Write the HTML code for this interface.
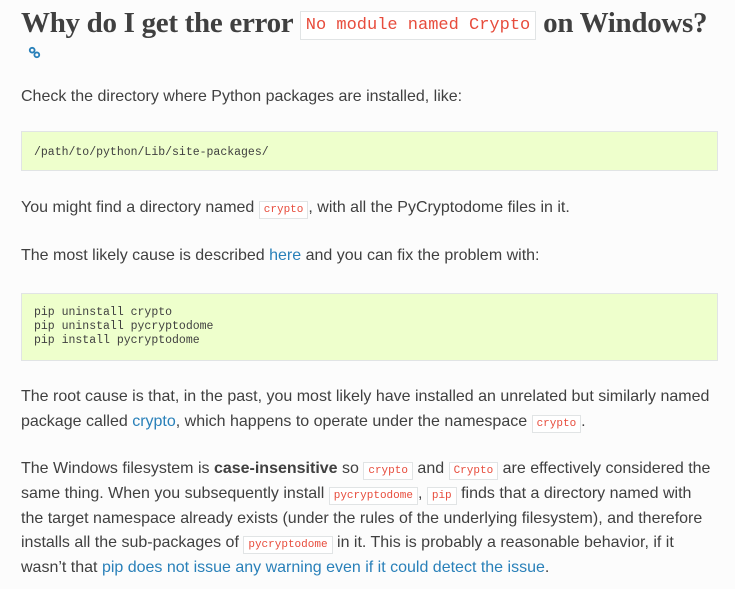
<!DOCTYPE html>
<html><head><meta charset="utf-8"><style>
body{margin:0;background:#fcfcfc;color:#404040;font-family:"Liberation Sans",sans-serif;font-size:16px;line-height:24px;width:735px;height:589px;overflow:hidden}
h1{font-family:"Liberation Serif",serif;font-weight:bold;font-size:29px;line-height:34px;margin:0;position:absolute;left:21px;top:6px;width:700px;color:#404040;letter-spacing:-0.3px}
h1 code{font-family:"Liberation Mono",monospace;font-weight:normal;font-size:17px;color:#e74c3c;background:#fff;border:1px solid #e1e4e5;padding:4px 5px;position:relative;top:-3px;letter-spacing:0;line-height:1}
p{margin:0;position:absolute;left:21px;width:695px}
code{font-family:"Liberation Mono",monospace;font-size:11px;line-height:1;color:#e74c3c;background:#fff;border:1px solid #e1e4e5;padding:2px 4px}
pre{position:absolute;left:21px;width:671px;margin:0;background:#eeffcc;border:1px solid #e1e4e5;font-family:"Liberation Mono",monospace;font-size:11.5px;line-height:14px;padding:12px}
a{color:#2980b9;text-decoration:none}
</style></head><body>
<h1>Why do I get the error <code>No module named Crypto</code> on Windows?</h1>
<svg style="position:absolute;left:28px;top:46px" width="13" height="13" viewBox="0 0 14 14"><g fill="none" stroke="#2980b9" stroke-width="2"><circle cx="4.5" cy="4.5" r="2.6"/><circle cx="9.5" cy="9.5" r="2.6"/></g></svg>
<p style="top:85px">Check the directory where Python packages are installed, like:</p>
<pre style="top:131px;padding-top:14px;height:12px">/path/to/python/Lib/site-packages/</pre>
<p style="top:196px">You might find a directory named <code>crypto</code>, with all the PyCryptodome files in it.</p>
<p style="top:244px">The most likely cause is described <a>here</a> and you can fix the problem with:</p>
<pre style="top:293px;height:42px">pip uninstall crypto
pip uninstall pycryptodome
pip install pycryptodome</pre>
<p style="top:385px;line-height:24.5px">The root cause is that, in the past, you most likely have installed an unrelated but similarly named package called <a>crypto</a>, which happens to operate under the namespace <code>crypto</code>.</p>
<p style="top:457px;line-height:24.8px">The Windows filesystem is <b>case-insensitive</b> so <code>crypto</code> and <code>Crypto</code> are effectively considered the same thing. When you subsequently install <code>pycryptodome</code>, <code>pip</code> finds that a directory named with<br>the target namespace already exists (under the rules of the underlying filesystem), and therefore installs all the sub-packages of <code>pycryptodome</code> in it. This is probably a reasonable behavior, if it wasn’t that <a>pip does not issue any warning even if it could detect the issue</a>.</p>
</body></html>
